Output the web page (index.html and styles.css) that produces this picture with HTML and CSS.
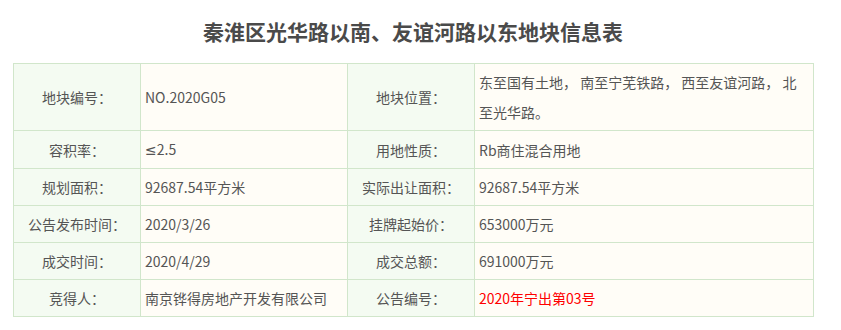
FILE: index.html
```html
<!DOCTYPE html>
<html lang="zh-CN">
<head>
<meta charset="utf-8">
<title>地块信息表</title>
<link rel="stylesheet" href="styles.css">
</head>
<body>
<div class="wrap">
  <h1 class="title">秦淮区光华路以南、友谊河路以东地块信息表</h1>
  <table class="info">
    <colgroup>
      <col class="c-label"><col class="c-val"><col class="c-label"><col class="c-val2">
    </colgroup>
    <tr>
      <td class="label">地块编号<span class="p">：</span></td>
      <td class="val">NO.2020G05</td>
      <td class="label">地块位置<span class="p">：</span></td>
      <td class="val">东至国有土地， 南至宁芜铁路， 西至友谊河路， 北至光华路。</td>
    </tr>
    <tr>
      <td class="label">容积率<span class="p">：</span></td>
      <td class="val"><span class="latin">≤</span>2.5</td>
      <td class="label">用地性质<span class="p">：</span></td>
      <td class="val">Rb商住混合用地</td>
    </tr>
    <tr>
      <td class="label">规划面积<span class="p">：</span></td>
      <td class="val">92687.54平方米</td>
      <td class="label">实际出让面积<span class="p">：</span></td>
      <td class="val">92687.54平方米</td>
    </tr>
    <tr>
      <td class="label">公告发布时间<span class="p">：</span></td>
      <td class="val">2020/3/26</td>
      <td class="label">挂牌起始价<span class="p">：</span></td>
      <td class="val">653000万元</td>
    </tr>
    <tr>
      <td class="label">成交时间<span class="p">：</span></td>
      <td class="val">2020/4/29</td>
      <td class="label">成交总额<span class="p">：</span></td>
      <td class="val">691000万元</td>
    </tr>
    <tr>
      <td class="label">竞得人<span class="p">：</span></td>
      <td class="val">南京铧得房地产开发有限公司</td>
      <td class="label">公告编号<span class="p">：</span></td>
      <td class="val red">2020年宁出第03号</td>
    </tr>
  </table>
</div>
</body>
</html>
```

FILE: styles.css
```css
html, body {
  margin: 0;
  padding: 0;
  background: #ffffff;
}
body {
  font-family: "Noto Sans CJK SC", "Noto Sans", sans-serif;
  color: #555555;
}
.wrap {
  width: 800px;
  margin-left: 13px;
  padding-top: 15px;
}
.title {
  margin: 0 0 16px 0;
  font-size: 21px;
  line-height: 32px;
  font-weight: bold;
  color: #4a4a4a;
  text-align: center;
}
.info {
  width: 800px;
  border-collapse: collapse;
  table-layout: fixed;
  font-size: 14px;
}
.c-label { width: 127px; }
.c-val { width: 207px; }
.c-val2 { width: 339px; }
.info td {
  border: 1px solid #d1e6cb;
  padding: 3px 4px;
  line-height: 30px;
  vertical-align: middle;
}
.info .label {
  background: #f4fbf2;
  text-align: center;
}
.info .val {
  background: #fffdf7;
  text-align: left;
}
.info .red {
  color: #ff0000;
}
.p {
  font-family: "Noto Sans CJK TC", "Noto Sans CJK SC", sans-serif;
}
.latin {
  font-family: "DejaVu Sans", "Noto Sans", sans-serif;
}
```
